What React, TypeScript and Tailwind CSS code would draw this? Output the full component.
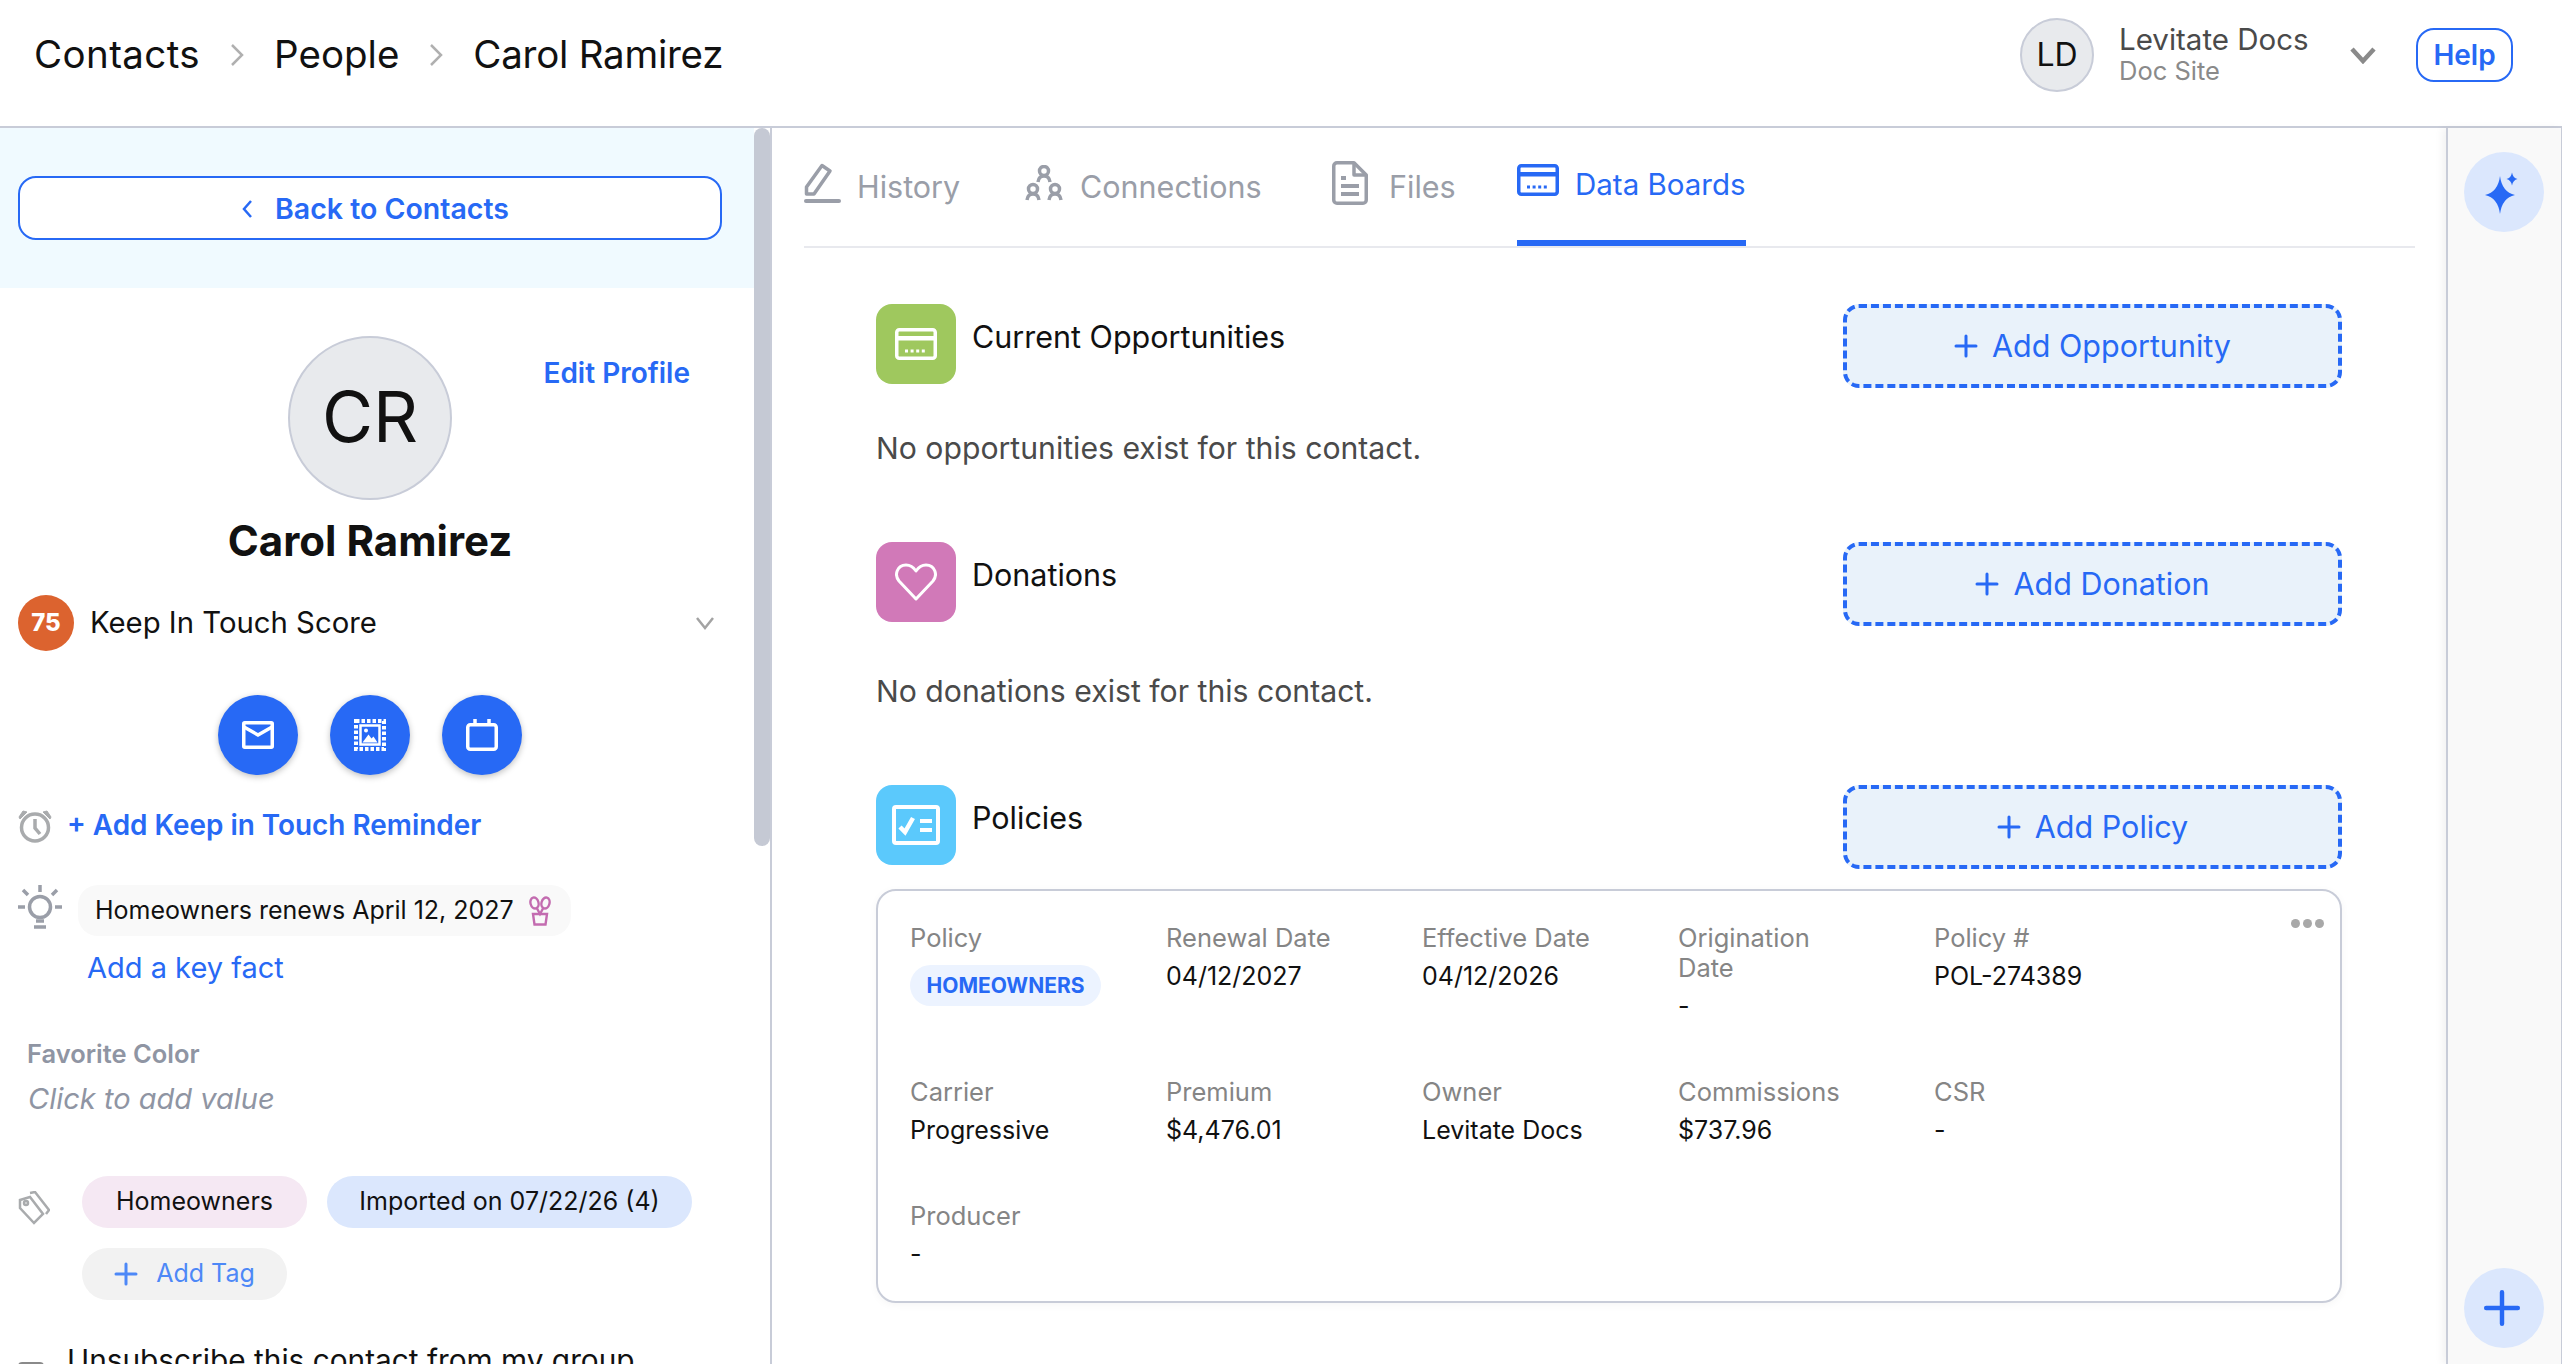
const blue = "#2769f5";

function Plus({ size = 22, width = 3, color = blue }: { size?: number; width?: number; color?: string }) {
  return (
    <svg width={size} height={size} viewBox="0 0 24 24" fill="none" stroke={color} strokeWidth={width} strokeLinecap="round">
      <path d="M12 2v20M2 12h20" />
    </svg>
  );
}

function CardIcon({ color }: { color: string }) {
  return (
    <svg width="42" height="32" viewBox="0 0 42 32" fill="none">
      <rect x="1.750" y="1.750" width="38.500" height="28.500" rx="2.500" stroke={color} strokeWidth="3.500" />
      <rect x="2" y="8" width="38" height="4.500" fill={color} />
      <path d="M10 23h22" stroke={color} strokeWidth="3" strokeDasharray="3 2.600" />
    </svg>
  );
}

const tabs = [
  { label: "History", cls: "w-[220px] gap-[16px]", icon: <HistoryIcon /> },
  { label: "Connections", cls: "w-[308px] gap-[16px]", icon: <ConnectionsIcon /> },
  { label: "Files", cls: "w-[185px] gap-[21px]", icon: <FilesIcon /> },
];

function HistoryIcon() {
  return (
    <svg width="37" height="40" viewBox="0 0 37 40" fill="none" stroke="#9a9ea8" strokeWidth="3.500" strokeLinejoin="round">
      <path d="M2.500 31V24L18 2.500l8 5.500L10 31z" />
      <path d="M2 38h33" strokeWidth="4" strokeLinecap="round" />
    </svg>
  );
}

function ConnectionsIcon() {
  return (
    <svg width="40" height="36" viewBox="0 0 40 36" fill="none" stroke="#9a9ea8" strokeWidth="3.500">
      <circle cx="20" cy="6" r="4.500" />
      <path d="M14 17c.5-4 3-6 6-6s5.500 2 6 6" />
      <circle cx="9" cy="24" r="4.500" />
      <path d="M3 35c.5-4 3-6 6-6s5.500 2 6 6" />
      <circle cx="31" cy="24" r="4.500" />
      <path d="M25 35c.5-4 3-6 6-6s5.500 2 6 6" />
    </svg>
  );
}

function FilesIcon() {
  return (
    <svg width="36" height="44" viewBox="0 0 36 44" fill="none" stroke="#9a9ea8" strokeWidth="3.500" strokeLinejoin="round">
      <path d="M5 1.750h17L34.250 14v25a3.250 3.250 0 0 1-3.250 3.250H5A3.250 3.250 0 0 1 1.750 39V5A3.250 3.250 0 0 1 5 1.750z" />
      <path d="M22 2v12h12" />
      <path d="M9 17h5M9 25h18M9 33h18" strokeWidth="4" />
    </svg>
  );
}

function Field({ label, value }: { label: string; value: string }) {
  return (
    <div className="w-[190px]">
      <div className="text-[25.5px] leading-[30px] text-[#858585]">{label}</div>
      <div className="mt-[8px] text-[25px] leading-[30px] text-[#111]">{value}</div>
    </div>
  );
}

function Section({ title, iconBg, icon, action }: { title: string; iconBg: string; icon: React.ReactNode; action: string }) {
  return (
    <div className="flex justify-between">
      <div className="flex items-start gap-4">
        <div className={`flex h-20 w-20 items-center justify-center rounded-2xl ${iconBg}`}>{icon}</div>
        <div className="pt-[15px] text-[30.5px] leading-9 text-[#111]">{title}</div>
      </div>
      <button className="flex h-[84px] w-[499px] items-center justify-center gap-[14px] rounded-[16px] border-4 border-dashed border-[#2769f5] bg-[#e9f2fa] text-[30.5px] text-[#2769f5]">
        <Plus size={24} />
        {action}
      </button>
    </div>
  );
}

export default function App() {
  return (
    <div className="flex h-[1364px] w-[2562px] flex-col overflow-hidden bg-white font-['Inter',sans-serif]">
      {/* Top bar */}
      <header className="flex h-[128px] shrink-0 items-center border-b-2 border-[#c8ccd8] pb-[17px] pl-[34px] pr-[49px]">
        <div className="flex items-center text-[38.5px] text-[#111]">
          <span className="tracking-[0.4px]">Contacts</span>
          <svg className="mx-[30px]" width="14" height="24" viewBox="0 0 14 24" fill="none" stroke="#b0b0b0" strokeWidth="2.500"><path d="M2 2l10 10L2 22" /></svg>
          <span>People</span>
          <svg className="mx-[30px]" width="14" height="24" viewBox="0 0 14 24" fill="none" stroke="#b0b0b0" strokeWidth="2.500"><path d="M2 2l10 10L2 22" /></svg>
          <span className="tracking-[-0.25px]">Carol Ramirez</span>
        </div>
        <div className="ml-auto flex items-center">
          <div className="flex h-[74px] w-[74px] items-center justify-center rounded-full border-2 border-[#c8ccd8] bg-[#e8eaed] text-[32px] text-[#111]">LD</div>
          <div className="ml-[25px] w-[231px] pb-[3px]">
            <div className="text-[29.5px] leading-[36px] text-[#4a4a4a]">Levitate Docs</div>
            <div className="text-[25.5px] leading-[28px] text-[#8a8a8a]">Doc Site</div>
          </div>
          <svg width="26" height="18" viewBox="0 0 26 18" fill="none" stroke="#8a8a8a" strokeWidth="4.500"><path d="M2 3l11 12L24 3" /></svg>
          <button className="ml-[40px] flex h-[54px] w-[97px] items-center justify-center rounded-[18px] border-2 border-[#2769f5] text-[28px] font-semibold text-[#2769f5]">Help</button>
        </div>
      </header>

      <div className="flex min-h-0 flex-1">
        {/* Contact panel */}
        <aside className="relative w-[772px] shrink-0 overflow-hidden border-r-2 border-[#c8ccd8]">
          <div className="absolute right-0 top-0 h-[718px] w-4 rounded-lg bg-[#c5c9d4]" />
          <div className="w-[754px]">
            <div className="h-[160px] bg-[#f0faff] pl-[18px] pr-[32px] pt-[48px]">
              <button className="flex h-16 w-full items-center justify-center gap-[22px] rounded-[18px] border-2 border-[#2769f5] bg-white pl-[10px] pt-[2px] text-[28.5px] font-semibold text-[#2769f5]">
                <svg width="12" height="20" viewBox="0 0 12 20" fill="none" stroke={blue} strokeWidth="2.500"><path d="M10 2L3 10l7 8" /></svg>
                Back to Contacts
              </button>
            </div>
            <div className="pl-[18px] pr-[32px]">
              <div className="mt-[48px] grid grid-cols-[1fr_164px_1fr]">
                <div />
                <div className="flex h-[164px] w-[164px] items-center justify-center rounded-full border-2 border-[#c8ccd8] bg-[#e8eaed] pb-[4px] text-[70px] text-[#111]">CR</div>
                <div className="mt-[19px] pr-[32px] text-right text-[28px] font-semibold leading-9 text-[#2769f5]">Edit Profile</div>
              </div>
              <div className="mt-[17px] text-center text-[42px] font-bold leading-[48px] text-[#111]">Carol Ramirez</div>
              <div className="mt-[30px] flex items-center">
                <div className="flex h-14 w-14 items-center justify-center rounded-full bg-[#dc632f] text-[24px] font-extrabold text-white">75</div>
                <div className="ml-[16px] text-[29.3px] text-[#111]">Keep In Touch Score</div>
                <svg className="ml-auto mr-[7px]" width="20" height="14" viewBox="0 0 20 14" fill="none" stroke="#a3a3a3" strokeWidth="2.500"><path d="M2 2l8 10 8-10" /></svg>
              </div>
              <div className="mt-[44px] flex justify-center gap-8">
                <div className="flex h-20 w-20 items-center justify-center rounded-full bg-[#2769f5] shadow-[0_2px_6px_rgba(0,0,0,0.25)]">
                  <svg width="32" height="28" viewBox="0 0 32 28" fill="none" stroke="white" strokeWidth="3.500"><rect x="1.750" y="1.750" width="28.500" height="24.500" rx="1" /><path d="M2 6l14 8 14-8" /></svg>
                </div>
                <div className="flex h-20 w-20 items-center justify-center rounded-full bg-[#2769f5] shadow-[0_2px_6px_rgba(0,0,0,0.25)]">
                  <svg width="32" height="32" viewBox="0 0 32 32" fill="none">
                    <rect x="2" y="2" width="28" height="28" stroke="white" strokeWidth="4" strokeDasharray="3.500 2" />
                    <rect x="6.500" y="6.500" width="19" height="19" stroke="white" strokeWidth="2.500" />
                    <circle cx="12" cy="11.500" r="2" fill="white" />
                    <path d="M8.500 23.500l6-8 3 4 2-2 4 6z" fill="white" />
                  </svg>
                </div>
                <div className="flex h-20 w-20 items-center justify-center rounded-full bg-[#2769f5] shadow-[0_2px_6px_rgba(0,0,0,0.25)]">
                  <svg width="32" height="32" viewBox="0 0 32 32" fill="none" stroke="white" strokeWidth="3.500"><rect x="1.750" y="5.750" width="28.500" height="24.500" rx="2.500" /><path d="M9 0v7M23 0v7" /></svg>
                </div>
              </div>
              <div className="mt-[32px] flex h-[38px] items-center gap-[15px]">
                <svg width="34" height="34" viewBox="0 0 34 34" fill="none" stroke="#a9abad" strokeWidth="3.500"><circle cx="17" cy="18.500" r="13.500" /><path d="M17 10v9l5 6" /><path d="M1 8l4-6 4 1-7 7zM33 8l-4-6-4 1 7 7z" fill="#a9abad" strokeWidth="1" /></svg>
                <span className="text-[27.9px] font-semibold text-[#2769f5]">+ Add Keep in Touch Reminder</span>
              </div>
              <div className="mt-[40px] flex items-start gap-4">
                <svg width="44" height="44" viewBox="0 0 44 44" fill="none" stroke="#9a9ea8" strokeWidth="3.500"><circle cx="22" cy="22" r="10.500" /><path d="M22 0v7M5 5l5 5M39 5l-5 5M0 22h7M37 22h7M16 42h12M18 36h8" /></svg>
                <div className="flex h-[51px] w-[493px] items-center gap-[14px] rounded-[20px] bg-[#f9f9f9] pl-[17px] text-[25px] text-[#111]">
                  <span>Homeowners renews April 12, 2027</span>
                  <svg width="24" height="30" viewBox="0 0 24 30" fill="none" stroke="#c36cb0" strokeWidth="2.400">
                    <path d="M5 18h14l-1.500 10.500h-11z" />
                    <path d="M5 13h14" strokeWidth="0" />
                    <ellipse cx="6.500" cy="7" rx="4" ry="5.500" transform="rotate(-15 6.500 7)" />
                    <ellipse cx="17.500" cy="7" rx="4" ry="5.500" transform="rotate(15 17.500 7)" />
                    <path d="M9 12.500l3 5.500 3-5.500" />
                  </svg>
                </div>
              </div>
              <div className="mt-[14px] pl-[69px] text-[29px] leading-9 text-[#2769f5]">Add a key fact</div>
              <div className="mt-[52px] pl-[9px] text-[25.5px] font-semibold leading-8 text-[#8f95a3]">Favorite Color</div>
              <div className="mt-[11px] pl-[10px] text-[29px] italic leading-9 text-[#8f95a3]">Click to add value</div>
              <div className="mt-[59px] flex">
                <div className="w-[64px] pt-[15px]">
                  <svg width="32" height="34" viewBox="0 0 32 34" fill="none" stroke="#a9abad" strokeWidth="2.500"><path d="M2 9l10-3 13 17-9 9L2 17zM12 2l5-1 14 18-3 4" /><circle cx="8" cy="12" r="2" /></svg>
                </div>
                <div className="flex flex-col items-start gap-5">
                  <div className="flex gap-5">
                    <div className="flex h-[52px] w-[225px] items-center justify-center rounded-full bg-[#f5e8f3] text-[25px] text-[#111]">Homeowners</div>
                    <div className="flex h-[52px] w-[365px] items-center justify-center rounded-full bg-[#dbe7fd] text-[25px] text-[#111]">Imported on 07/22/26 (4)</div>
                  </div>
                  <div className="flex h-[52px] w-[205px] items-center justify-center gap-[18px] rounded-full bg-[#f2f2f2] text-[25px] text-[#4d88f7]">
                    <Plus size={24} color="#4d88f7" />
                    Add Tag
                  </div>
                </div>
              </div>
              <div className="mt-[40px] flex gap-[23px]">
                <div className="mt-[22px] h-[26px] w-[26px] shrink-0 rounded-[4px] border-2 border-[#8a8a8a]" />
                <div className="text-[29.8px] leading-[40px] text-[#111]">Unsubscribe this contact from my group</div>
              </div>
            </div>
          </div>
        </aside>

        {/* Main content */}
        <main className="min-w-0 flex-1 overflow-hidden">
          <div className="ml-[32px] mr-[31px] flex h-[120px] border-b-2 border-[#e8e9ee]">
            {tabs.map((t) => (
              <div key={t.label} className={`flex items-center text-[30.5px] text-[#9a9ea8] ${t.cls}`}>
                <div className="-mt-[8px]">{t.icon}</div>
                <span>{t.label}</span>
              </div>
            ))}
            <div className="flex h-[118px] w-[229px] items-center gap-[16px] border-b-[6px] border-[#2769f5] text-[29.5px] text-[#2769f5]">
              <div className="-mt-[8px]">
                <CardIcon color={blue} />
              </div>
              <span>Data Boards</span>
            </div>
          </div>
          <div className="mx-[104px] mt-[56px]">
            <Section title="Current Opportunities" iconBg="bg-[#9fc85e]" action="Add Opportunity" icon={<CardIcon color="white" />} />
            <div className="mt-[42px] text-[30.2px] leading-9 text-[#4a4a4a]">No opportunities exist for this contact.</div>
            <div className="mt-[76px]">
              <Section
                title="Donations"
                iconBg="bg-[#d179b8]"
                action="Add Donation"
                icon={
                  <svg width="42" height="38" viewBox="0 0 42 38" fill="none" stroke="white" strokeWidth="3" strokeLinejoin="round">
                    <path d="M21 36L4 18C-1 12 2 2 11 2c5 0 8 3 10 6 2-3 5-6 10-6 9 0 12 10 7 16z" />
                  </svg>
                }
              />
            </div>
            <div className="mt-[47px] text-[30.2px] leading-9 text-[#4a4a4a]">No donations exist for this contact.</div>
            <div className="mt-[76px]">
              <Section
                title="Policies"
                iconBg="bg-[#5bc9fc]"
                action="Add Policy"
                icon={
                  <svg width="48" height="40" viewBox="0 0 48 40" fill="none" stroke="white">
                    <rect x="2" y="2" width="44" height="36" rx="2" strokeWidth="4" />
                    <path d="M8 22l5 5 8-14" strokeWidth="4.500" />
                    <path d="M28 16h12M28 25h12" strokeWidth="4" />
                  </svg>
                }
              />
            </div>
            <div className="relative mt-[20px] rounded-[20px] border-2 border-[#c8ccd8] pb-[32px] pl-[32px] pt-[32px] shadow-[0_2px_8px_rgba(0,0,0,0.04)]">
              <div className="absolute right-[16px] top-[28px] flex gap-[3px]">
                <div className="h-[9px] w-[9px] rounded-full bg-[#a8a8a8]" />
                <div className="h-[9px] w-[9px] rounded-full bg-[#a8a8a8]" />
                <div className="h-[9px] w-[9px] rounded-full bg-[#a8a8a8]" />
              </div>
              <div className="grid grid-cols-[repeat(5,256px)] gap-y-[56px]">
                <div>
                  <div className="text-[25.5px] leading-[30px] text-[#858585]">Policy</div>
                  <div className="mt-3 flex h-[41px] w-[191px] items-center justify-center rounded-full bg-[#ecf3ff] text-[21px] font-bold text-[#2769f5]">HOMEOWNERS</div>
                </div>
                <Field label="Renewal Date" value="04/12/2027" />
                <Field label="Effective Date" value="04/12/2026" />
                <Field label="Origination Date" value="-" />
                <Field label="Policy #" value="POL-274389" />
                <Field label="Carrier" value="Progressive" />
                <Field label="Premium" value="$4,476.01" />
                <Field label="Owner" value="Levitate Docs" />
                <Field label="Commissions" value="$737.96" />
                <Field label="CSR" value="-" />
                <Field label="Producer" value="-" />
              </div>
            </div>
          </div>
        </main>

        {/* Right rail */}
        <div className="flex w-[116px] shrink-0 flex-col items-center justify-between border-l-2 border-r border-[#c8ccd8] bg-[#f9f9f9] pb-[16px] pr-[2px] pt-[24px] shadow-[-4px_0_8px_rgba(0,0,0,0.05)]">
          <div className="flex h-20 w-20 items-center justify-center rounded-full bg-[#dbe7fd]">
            <svg className="mr-[2px]" width="44" height="48" viewBox="0 0 44 48" fill={blue}>
              <path d="M19 8Q21 24 34 27Q21 30 19 46Q17 30 4 27Q17 24 19 8z" />
              <path d="M31 4.500Q32 10 36.500 11Q32 12 31 17.500Q30 12 25.500 11Q30 10 31 4.500z" />
            </svg>
          </div>
          <div className="flex h-20 w-20 items-center justify-center rounded-full bg-[#dbe7fd] pr-[3px]">
            <Plus size={38} width={2.8} />
          </div>
        </div>
      </div>
    </div>
  );
}
